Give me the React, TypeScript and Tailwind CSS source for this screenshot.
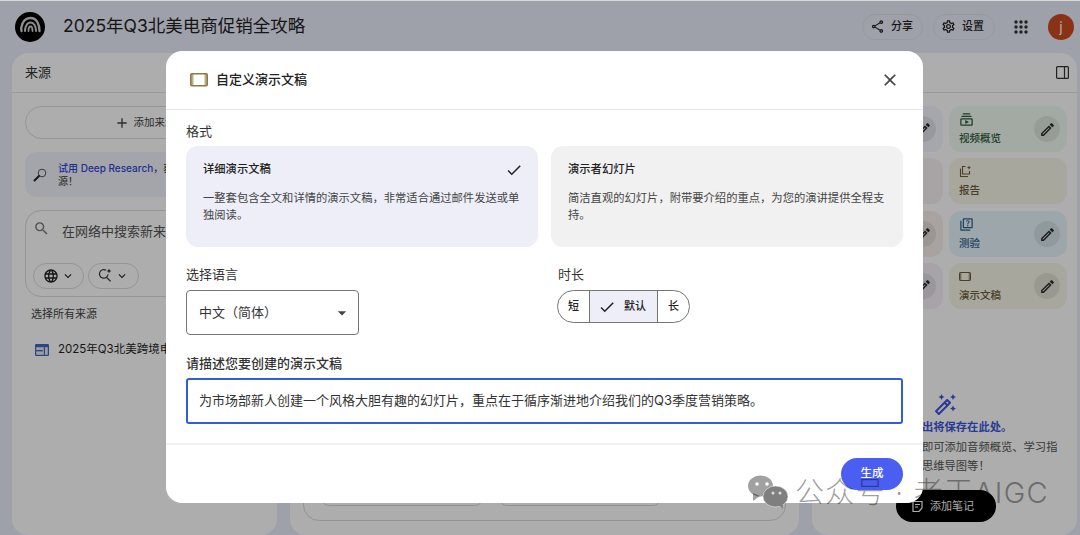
import React from 'react';
import {
  MdAdd,
  MdArrowDropDown,
  MdCheck,
  MdClose,
  MdKeyboardArrowDown,
  MdLanguage,
  MdOutlineAutoFixHigh,
  MdOutlineEdit,
  MdOutlineQuiz,
  MdOutlineSettings,
  MdOutlineShare,
  MdOutlineSubscriptions,
  MdSearch,
} from 'react-icons/md';

const FONT = "font-['Inter','Noto_Sans_CJK_SC',sans-serif]";

const Logo: React.FC = () => (
  <svg width="30" height="30" viewBox="0 0 30 30">
    <circle cx="15" cy="15" r="15" fill="#000" />
    <g fill="none" stroke="#cfcfcf" strokeLinecap="round">
      <path d="M6.500 19c-.6-2 0-13 9-13 6 0 9 6 9 13" strokeWidth="2.400" />
      <path d="M10 19c0-4 2-8.500 5.500-8.500 3.500 0 5.500 4 5.500 8.500" strokeWidth="2" />
      <path d="M13.500 19c0-2.500.8-4.500 2-4.500 1.300 0 2 2 2 4.500" strokeWidth="1.800" />
    </g>
  </svg>
);

const SlidesIcon: React.FC<{ color: string; size?: number }> = ({ color, size = 18 }) => (
  <svg width={size} height={size * 0.75} viewBox="0 0 18 13.5">
    <rect x="0.75" y="0.75" width="16.5" height="12" rx="1" fill="none" stroke={color} strokeWidth="1.5" />
    <rect x="1" y="1" width="2.5" height="11.5" fill={color} opacity="0.6" />
    <rect x="14.5" y="1" width="2.5" height="11.5" fill={color} opacity="0.6" />
  </svg>
);

const ReportIcon: React.FC = () => (
  <svg width="13" height="13" viewBox="0 0 13 13" fill="none" stroke="#6b5d36" strokeWidth="1.1">
    <path d="M6.500 1.500H3.500v7.500h7V6" />
    <path d="M1.500 3.500v8h7.500" />
    <path d="M10 0.500l.6 1.500 1.500.6-1.500.6-.6 1.500-.6-1.500-1.500-.6 1.500-.6z" fill="#6b5d36" stroke="none" />
  </svg>
);

const ResearchIcon: React.FC = () => (
  <svg width="14" height="14" viewBox="0 0 14 14" fill="none">
    <circle cx="9" cy="5" r="3.800" stroke="#555" strokeWidth="1" />
    <path d="M6 8l-4.500 4.500" stroke="#222" strokeWidth="2" strokeLinecap="round" />
  </svg>
);

const SparkSearchIcon: React.FC = () => (
  <svg width="15" height="15" viewBox="0 0 15 15" fill="none">
    <path d="M8 2.200A4.300 4.300 0 1 0 10 6.500" stroke="#333" strokeWidth="1.2" />
    <path d="M8.600 9.400l4 4" stroke="#333" strokeWidth="1.3" />
    <path d="M11 0.500l.7 1.800 1.800.7-1.800.7-.7 1.800-.7-1.800-1.800-.7 1.800-.7z" fill="#333" />
  </svg>
);

const SourceIcon: React.FC = () => (
  <svg width="14" height="12" viewBox="0 0 14 12">
    <rect width="14" height="12" rx="1.200" fill="#3f66c8" />
    <rect x="1.200" y="3.200" width="11.600" height="7.600" fill="#e9e9e9" />
    <rect x="1.200" y="6" width="6.600" height="1.400" fill="#3f66c8" />
    <rect x="8.800" y="3.200" width="1.200" height="7.600" fill="#3f66c8" />
  </svg>
);

const NoteIcon: React.FC = () => (
  <svg width="13" height="13" viewBox="0 0 13 13" fill="none" stroke="#fff" strokeWidth="1.200">
    <path d="M2 1.500h9v6.500l-3 3.500H2z" />
    <path d="M4 4.500h5M4 7h3" />
  </svg>
);

const AppsIcon: React.FC = () => (
  <svg width="14" height="14" viewBox="0 0 14 14" fill="#333">
    {[2, 7, 12].map((y) =>
      [2, 7, 12].map((x) => <circle key={`${x}-${y}`} cx={x} cy={y} r="1.700" />)
    )}
  </svg>
);

const StudioCard: React.FC<{ bg: string; text: string; icon?: React.ReactNode; label?: string }> = ({
  bg,
  text,
  icon,
  label,
}) => (
  <div className={`relative h-[46px] rounded-xl pl-[10px] pt-[6px] ${bg} ${text}`}>
    <div className="h-[14px] flex items-center">{icon}</div>
    {label && <div className="mt-[6px] text-[10.5px] leading-[14px] font-medium">{label}</div>}
  </div>
);

const EditCircle: React.FC = () => (
  <div className="absolute right-[7px] top-[10px] w-[26px] h-[26px] rounded-full bg-black/8 flex items-center justify-center text-[#2b2b2b]">
    <MdOutlineEdit size={17} />
  </div>
);

const App: React.FC = () => {
  return (
    <div className={`relative h-[535px] w-[1080px] overflow-hidden bg-[#ebedfb] text-[#1f1f1f] ${FONT}`}>
      {/* page behind the dialog */}
      <header className="h-[53px] flex items-center pl-[15px] pr-[6px]">
        <Logo />
        <h1 className="ml-[18px] text-[17.5px] font-normal">2025年Q3北美电商促销全攻略</h1>
        <div className="ml-auto flex items-center">
          <div className="h-[26px] w-[61px] rounded-full border border-[#dfe1ea] flex items-center pl-[7px] gap-[6px] text-[11px] font-medium">
            <MdOutlineShare size={15} />
            分享
          </div>
          <div className="ml-[10px] h-[26px] w-[62px] rounded-full border border-[#dfe1ea] flex items-center pl-[7px] gap-[6px] text-[11px] font-medium">
            <MdOutlineSettings size={15} />
            设置
          </div>
          <div className="ml-[19px]">
            <AppsIcon />
          </div>
          <div className="ml-[20px] w-[26px] h-[26px] rounded-full bg-[#cb4b1f] text-white text-[14px] flex items-center justify-center">
            j
          </div>
        </div>
      </header>

      <div className="flex h-[482px] gap-[13px] pl-3 pr-[3px]">
        {/* sources */}
        <section className="w-[265px] rounded-2xl bg-white flex flex-col">
          <div className="h-[40px] flex items-center px-[13px] border-b border-[#e3e3e3] text-[13px] text-[#333]">来源</div>
          <div className="px-[13px] pt-[13px]">
            <div className="h-[33px] rounded-full border border-[#dcdcdc] flex items-center justify-center gap-[4px] text-[10.5px] text-[#444]">
              <MdAdd size={16} />
              添加来源
            </div>
            <div className="mt-[13px] h-[45px] rounded-xl bg-[#f1f3fb] flex items-center pl-[8px] gap-[11px] text-[10px] leading-[13px]">
              <ResearchIcon />
              <div className="text-[#333]">
                <span className="text-[#2f46d6] font-medium">试用 Deep Research</span>，获取深度报告和新来
                <br />
                源！
              </div>
            </div>
            <div className="mt-[13px] h-[87px] rounded-2xl border border-[#d9dbe6] pl-[7px] pt-[9px]">
              <div className="flex items-center text-[13px] text-[#555]">
                <MdSearch size={17} className="mt-[-4px] text-[#777]" />
                <span className="ml-[12px] mt-[2px]">在网络中搜索新来源</span>
              </div>
              <div className="mt-[21px] flex gap-[4px]">
                <div className="h-[26px] w-[51px] rounded-full border border-[#dcdcdc] flex items-center justify-center text-[#222]">
                  <MdLanguage size={16} />
                  <MdKeyboardArrowDown size={14} className="ml-[2px]" />
                </div>
                <div className="h-[26px] w-[51px] rounded-full border border-[#dcdcdc] flex items-center justify-center text-[#222]">
                  <SparkSearchIcon />
                  <MdKeyboardArrowDown size={14} className="ml-[2px]" />
                </div>
              </div>
            </div>
            <div className="mt-[9px] pl-[6px] text-[11px] leading-[16px] text-[#444]">选择所有来源</div>
            <div className="mt-[19px] pl-[10px] flex items-center gap-[9px] text-[11.5px] whitespace-nowrap">
              <SourceIcon />
              2025年Q3北美跨境电商促销策略
            </div>
          </div>
        </section>

        {/* chat */}
        <section className="w-[509px] rounded-2xl bg-white px-[13px] flex flex-col justify-end pb-[14px]">
          <div className="h-[60px] rounded-2xl border border-[#d9d9d9] px-[17px] flex items-end pb-[14px] gap-4">
            <div className="w-[162px] h-[20px] rounded-lg border border-[#d9d9d9]" />
            <div className="w-[162px] h-[20px] rounded-lg border border-[#d9d9d9]" />
          </div>
        </section>

        {/* studio */}
        <section className="w-[265px] rounded-2xl bg-white flex flex-col">
          <div className="h-[40px] flex items-center justify-end pr-[8px] border-b border-[#e3e3e3]">
            <svg width="13" height="13" viewBox="0 0 13 13" fill="none" stroke="#333" strokeWidth="1.2">
              <rect x="0.6" y="0.6" width="11.8" height="11.8" rx="1" />
              <path d="M8.500 0.6v11.8" />
            </svg>
          </div>
          <div className="pl-[13px] pr-[10px] pt-[13px] grid grid-cols-2 gap-x-[6px] gap-y-[6px]">
            <div className="relative">
              <StudioCard bg="bg-[#f5f5ff]" text="text-[#333]" />
              <EditCircle />
            </div>
            <div className="relative">
              <StudioCard
                bg="bg-[#f0fbf2]"
                text="text-[#2d5a3a]"
                icon={<MdOutlineSubscriptions size={15} />}
                label="视频概览"
              />
              <EditCircle />
            </div>
            <div className="relative">
              <StudioCard bg="bg-[#f8f0f4]" text="text-[#333]" />
            </div>
            <div className="relative">
              <StudioCard bg="bg-[#f8f6e8]" text="text-[#6b5d36]" icon={<ReportIcon />} label="报告" />
            </div>
            <div className="relative mt-px">
              <StudioCard bg="bg-[#f8f1ee]" text="text-[#333]" />
              <EditCircle />
            </div>
            <div className="relative mt-px">
              <StudioCard bg="bg-[#e8f6fc]" text="text-[#2c6292]" icon={<MdOutlineQuiz size={15} />} label="测验" />
              <EditCircle />
            </div>
            <div className="relative">
              <StudioCard bg="bg-[#f6f0fa]" text="text-[#333]" />
              <EditCircle />
            </div>
            <div className="relative">
              <StudioCard
                bg="bg-[#f8f6e8]"
                text="text-[#6b5d36]"
                icon={<SlidesIcon color="#6b5d36" size={12} />}
                label="演示文稿"
              />
              <EditCircle />
            </div>
          </div>
          <div className="mt-[84px] flex flex-col items-center">
            <MdOutlineAutoFixHigh size={24} className="text-[#3d55e0]" />
            <div className="mt-[1px] text-[11.3px] leading-[18px] font-semibold text-[#3d55e0] whitespace-nowrap">
              工作室输出将保存在此处。
            </div>
            <div className="w-[235px] mt-[2px] text-[11.3px] leading-[19px] text-center text-[#555]">
              添加来源后，点击即可添加音频概览、学习指南、思维导图等！
            </div>
          </div>
          <div className="mt-[14px] ml-[84px] w-[100px] h-[32px] rounded-full bg-black text-white text-[11px] flex items-center pl-[15px] gap-[6px]">
            <NoteIcon />
            添加笔记
          </div>
        </section>
      </div>

      {/* scrim */}
      <div className="absolute inset-x-0 top-px bottom-0 bg-black/32" />
      <div className="absolute inset-x-0 top-0 h-px bg-[#d8d8d8]" />

      {/* dialog */}
      <div className="absolute left-[166px] top-[51px] w-[757px] h-[452px] rounded-2xl bg-white flex flex-col">
        <div className="h-[59px] shrink-0 flex items-center pl-6 pr-[23px] border-b border-[#e6e6e6]">
          <SlidesIcon color="#8a7a45" />
          <div className="ml-2 text-[13px] font-medium text-[#222]">自定义演示文稿</div>
          <MdClose size={20} className="ml-auto text-[#444]" />
        </div>

        <div className="px-5 pt-[11px]">
          <div className="h-5 text-[13px] leading-5 text-[#333]">格式</div>
          <div className="mt-[5px] grid grid-cols-2 gap-[13px]">
            <div className="h-[101px] rounded-xl bg-[#edeef8] pl-[17px] pr-[15px] pt-[15px]">
              <div className="flex items-center justify-between h-[17px] text-[11.3px] font-medium text-[#222]">
                详细演示文稿
                <MdCheck size={18} className="text-[#222]" />
              </div>
              <div className="mt-[12px] text-[11.3px] leading-[16.5px] text-[#444]">
                一整套包含全文和详情的演示文稿，非常适合通过邮件发送或单独阅读。
              </div>
            </div>
            <div className="h-[101px] rounded-xl bg-[#f1f1f1] pl-[17px] pr-[15px] pt-[15px]">
              <div className="h-[17px] flex items-center text-[11.3px] font-medium text-[#222]">演示者幻灯片</div>
              <div className="mt-[12px] text-[11.3px] leading-[16.5px] text-[#444]">
                简洁直观的幻灯片，附带要介绍的重点，为您的演讲提供全程支持。
              </div>
            </div>
          </div>

          <div className="mt-[17px] grid grid-cols-[372px_1fr]">
            <div>
              <div className="h-5 text-[13px] leading-5 text-[#333]">选择语言</div>
              <div className="mt-[6px] w-[173px] h-[45px] rounded-[4px] border border-[#757575] flex items-center pl-3 pr-[6px] text-[13px] text-[#333]">
                中文（简体）
                <MdArrowDropDown size={20} className="ml-auto text-[#444]" />
              </div>
            </div>
            <div>
              <div className="h-5 text-[13px] leading-5 text-[#333]">时长</div>
              <div className="mt-[6px] ml-[-1px] w-[133px] h-[33px] rounded-full border border-[#757575] overflow-hidden flex text-[11px] font-medium text-[#222]">
                <div className="w-[31px] flex items-center justify-center">短</div>
                <div className="w-[69px] border-x border-[#757575] bg-[#edeef8] flex items-center justify-center gap-[8px] pr-[3px]">
                  <MdCheck size={18} />
                  默认
                </div>
                <div className="flex-1 flex items-center justify-center">长</div>
              </div>
            </div>
          </div>

          <div className="mt-[18px] h-5 text-[13px] leading-5 font-medium text-[#333]">请描述您要创建的演示文稿</div>
          <div className="mt-[5px] h-[46px] rounded-[3px] border-2 border-[#2f5fd0] flex items-center pl-[11px] text-[13px] text-[#333]">
            为市场部新人创建一个风格大胆有趣的幻灯片，重点在于循序渐进地介绍我们的Q3季度营销策略。
          </div>
        </div>

        <div className="mt-[19px] border-t-2 border-[#f1f1f6] flex justify-end pr-5 pt-[13px]">
          <div className="w-[62px] h-[32px] rounded-full bg-[#4a5ef2] text-white text-[11.5px] font-medium flex items-center justify-center">
            生成
          </div>
        </div>
      </div>

      {/* watermark */}
      <div className="absolute left-[748px] top-[475px] flex items-center gap-[7px] text-black/40 whitespace-nowrap">
        <svg width="40" height="34" viewBox="0 0 40 34">
          <ellipse cx="12.500" cy="11" rx="12.500" ry="10.500" fill="#000" fillOpacity="0.37" />
          <path d="M5 18l0 8 7-5z" fill="#000" fillOpacity="0.37" />
          <ellipse cx="27.500" cy="21.500" rx="12.500" ry="10.500" fill="#7f7f7f" stroke="#fff" strokeOpacity="0.5" />
          <path d="M31 30l4 4-.5-6z" fill="#7f7f7f" />
          <circle cx="9" cy="9" r="1.800" fill="#fff" />
          <circle cx="19" cy="9" r="1.800" fill="#fff" />
          <circle cx="25" cy="18" r="1.500" fill="#ddd" />
          <circle cx="32" cy="18" r="1.500" fill="#ddd" />
        </svg>
        <span className="text-[29px] leading-none tracking-[1.2px] font-light">公众号 · 老王AIGC</span>
      </div>
    </div>
  );
};

export default App;
